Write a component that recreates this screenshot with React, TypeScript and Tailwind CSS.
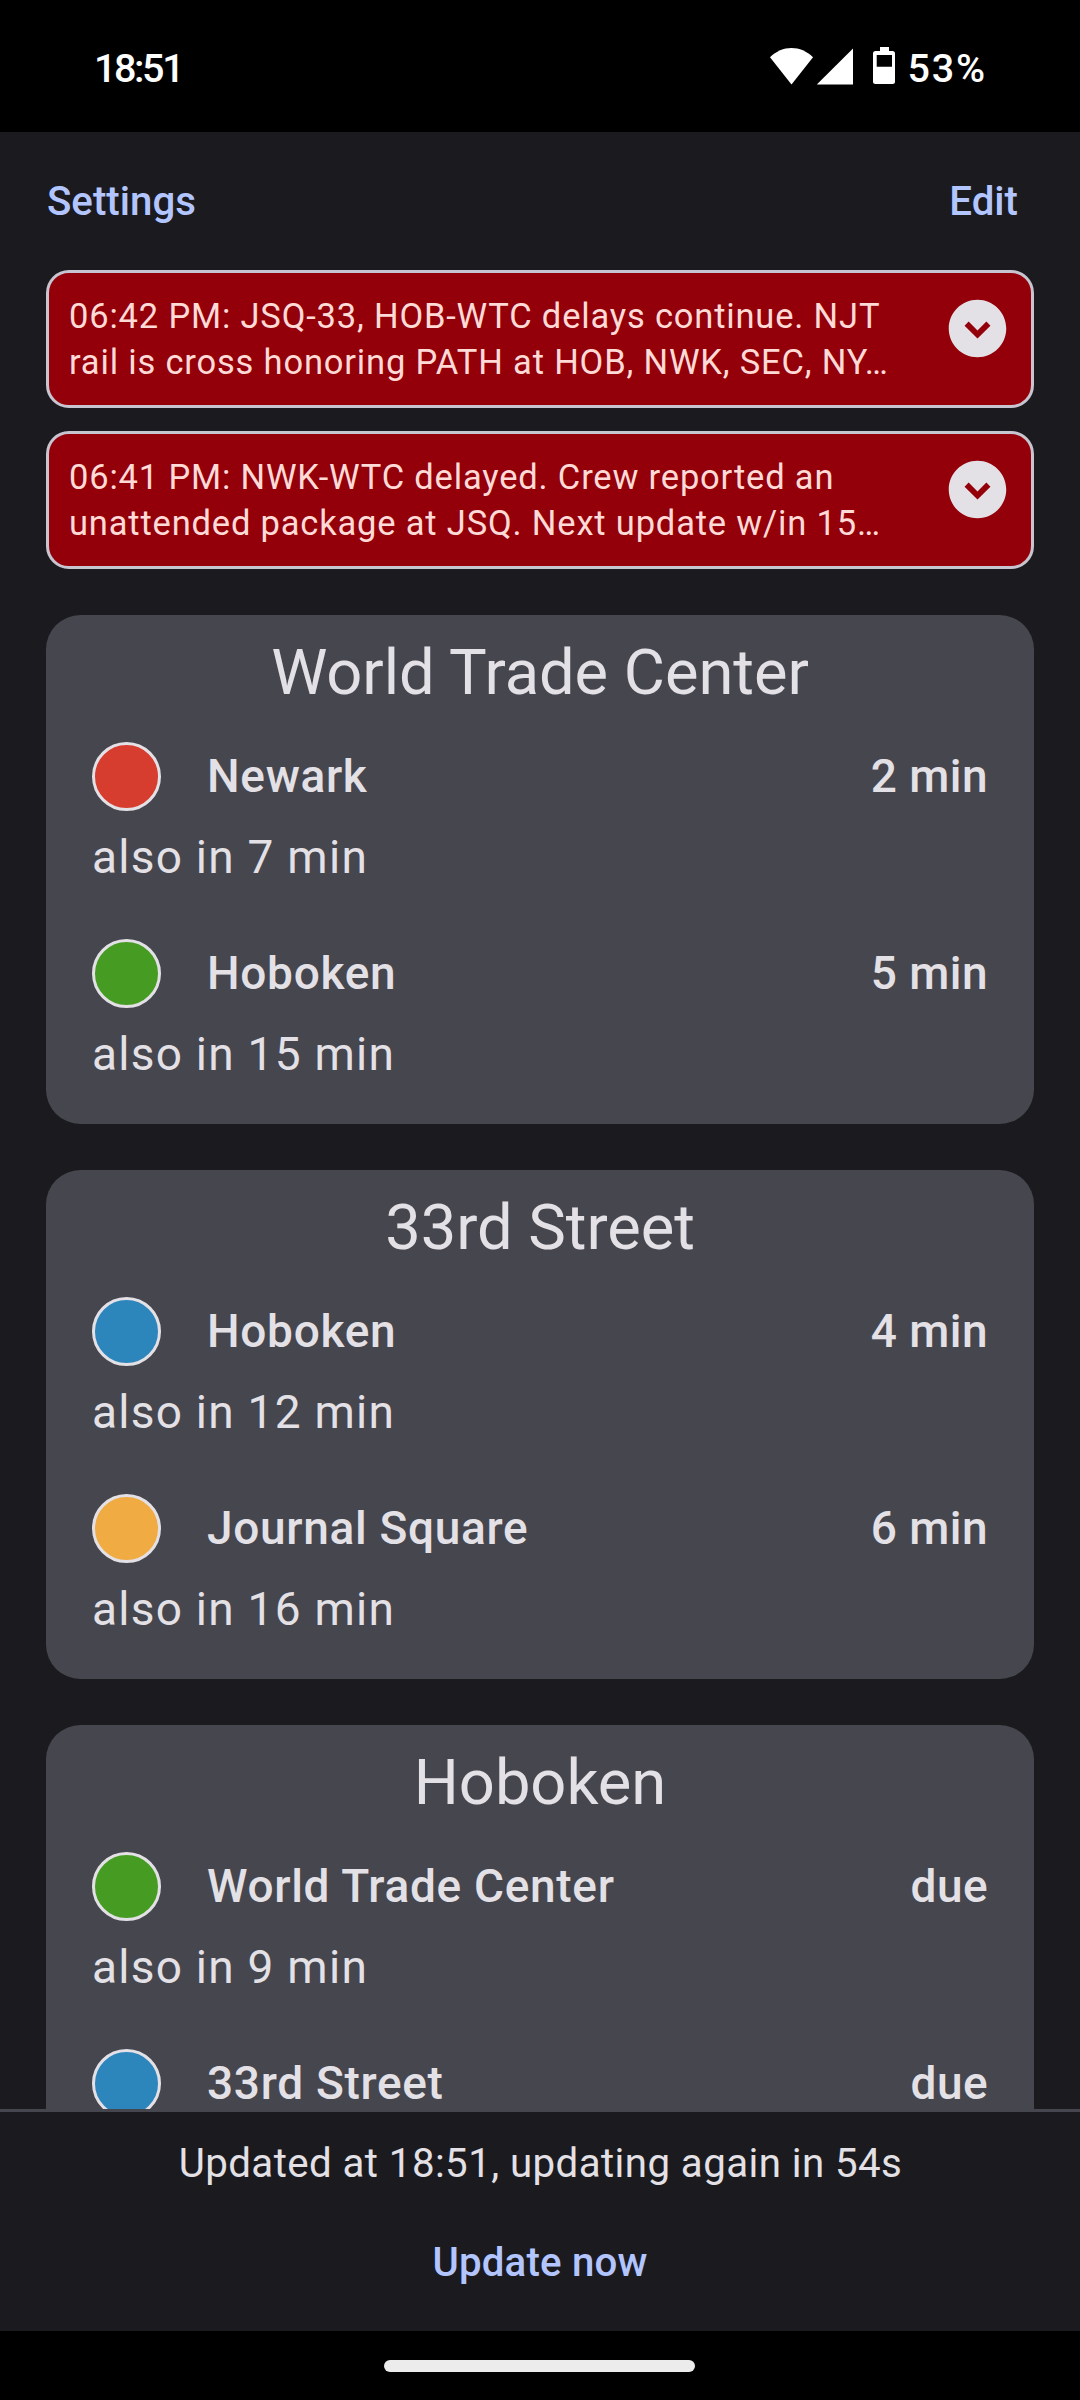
interface Train {
  name: string;
  color: string;
  arrival: string;
  later: string;
}

interface Station {
  name: string;
  trains: Train[];
}

const ALERTS = [
  "06:42 PM: JSQ-33, HOB-WTC delays continue. NJT\nrail is cross honoring PATH at HOB, NWK, SEC, NY…",
  "06:41 PM: NWK-WTC delayed. Crew reported an\nunattended package at JSQ. Next update w/in 15…",
];

const STATIONS: Station[] = [
  {
    name: "World Trade Center",
    trains: [
      { name: "Newark", color: "bg-[#d63d2e]", arrival: "2 min", later: "also in 7 min" },
      { name: "Hoboken", color: "bg-[#469c23]", arrival: "5 min", later: "also in 15 min" },
    ],
  },
  {
    name: "33rd Street",
    trains: [
      { name: "Hoboken", color: "bg-[#2c85bb]", arrival: "4 min", later: "also in 12 min" },
      { name: "Journal Square", color: "bg-[#f0ab43]", arrival: "6 min", later: "also in 16 min" },
    ],
  },
  {
    name: "Hoboken",
    trains: [
      { name: "World Trade Center", color: "bg-[#469c23]", arrival: "due", later: "also in 9 min" },
      { name: "33rd Street", color: "bg-[#2c85bb]", arrival: "due", later: "" },
    ],
  },
];

function StatusBar() {
  return (
    <div className="flex h-[132px] shrink-0 items-center justify-between bg-black pr-[93px] pl-[94px] text-[39.5px] font-medium text-white">
      <span className="pt-[5px] tracking-[-2.4px]">18:51</span>
      <div className="flex items-center">
        <svg width="127" height="40" viewBox="0 0 127 40" fill="#fff" aria-hidden="true">
          <path d="M0 11.2C6.2 5.2 13.6 2 21.5 2S36.800 5.200 43 11.200L21.500 38.500z" />
          <path d="M46.800 38.500 83 2.500v36z" />
          <path
            fillRule="evenodd"
            d="M110 1h9v4h3.500a2.500 2.500 0 0 1 2.500 2.500v28a2.500 2.500 0 0 1-2.500 2.500h-17a2.500 2.500 0 0 1-2.500-2.500v-28a2.500 2.500 0 0 1 2.500-2.500h4.500zM106.700 9v11.800h15.300V9z"
          />
        </svg>
        <span className="ml-[11px] pt-[5px] tracking-[1.8px]">53%</span>
      </div>
    </div>
  );
}

function AlertCard({ text }: { text: string }) {
  return (
    <div className="flex h-[138px] items-start justify-between rounded-[23px] border-3 border-[#c7c5d0] bg-[#93000a] py-5 pr-[19px] pl-5">
      <p className="text-[34.5px] leading-[46px] tracking-[0.82px] whitespace-pre text-[#ffdad6]">
        {text}
      </p>
      <svg width="69" height="69" viewBox="0 0 24 24" className="mt-px shrink-0" aria-hidden="true">
        <path
          fill="#e4e1e6"
          d="M12 2C6.480 2 2 6.480 2 12s4.480 10 10 10 10-4.480 10-10S17.520 2 12 2zm0 13.500L7.500 11l1.420-1.410L12 12.670l3.080-3.080L16.500 11 12 15.500z"
        />
      </svg>
    </div>
  );
}

function TrainRow({ train }: { train: Train }) {
  return (
    <div className="flex flex-col gap-3 text-[46px] leading-[69px]">
      <div className="flex items-center font-medium">
        <span className={`size-[69px] rounded-full border-3 border-[#e4e1e6] ${train.color}`} />
        <span className="ml-[46px] flex-1 tracking-[0.68px]">{train.name}</span>
        <span className="tracking-[0.43px]">{train.arrival}</span>
      </div>
      {train.later && <p className="tracking-[1.25px]">{train.later}</p>}
    </div>
  );
}

function StationCard({ station }: { station: Station }) {
  return (
    <section className="h-[509px] shrink-0 rounded-[34.5px] bg-[#46464f] px-[46px] pt-[17px]">
      <h2 className="text-center text-[63.25px] leading-[80px] tracking-[-0.04px]">{station.name}</h2>
      <div className="mt-[30px] flex flex-col gap-[47px]">
        {station.trains.map((train) => (
          <TrainRow key={train.name} train={train} />
        ))}
      </div>
    </section>
  );
}

export default function App() {
  return (
    <div className="flex h-[2400px] w-[1080px] flex-col overflow-hidden bg-[#1b1b1f] font-[Roboto,sans-serif] text-[#e4e1e6]">
      <StatusBar />

      <header className="flex h-[138px] shrink-0 items-center justify-between pt-0.5 pr-[62px] pl-[47px] text-[40.25px] leading-[58px] font-medium text-[#b3c5ff]">
        <button type="button">Settings</button>
        <button type="button">Edit</button>
      </header>

      <main className="min-h-0 flex-1 overflow-hidden px-[46px]">
        <div className="flex flex-col gap-[23px]">
          {ALERTS.map((text) => (
            <AlertCard key={text} text={text} />
          ))}
        </div>
        <div className="mt-[46px] flex flex-col gap-[46px]">
          {STATIONS.map((station) => (
            <StationCard key={station.name} station={station} />
          ))}
        </div>
      </main>

      <footer className="flex h-[222px] shrink-0 flex-col items-center border-t-3 border-[#46464f] pt-[23px] text-[40.25px] leading-[57px]">
        <p className="pl-px tracking-[0.42px]">Updated at 18:51, updating again in 54s</p>
        <button type="button" className="mt-[42px] font-medium tracking-[0.16px] text-[#b3c5ff]">
          Update now
        </button>
      </footer>

      <div className="flex h-[69px] shrink-0 items-center justify-center bg-black pr-px">
        <div className="h-3 w-[311px] rounded-full bg-[#ececec]" />
      </div>
    </div>
  );
}
